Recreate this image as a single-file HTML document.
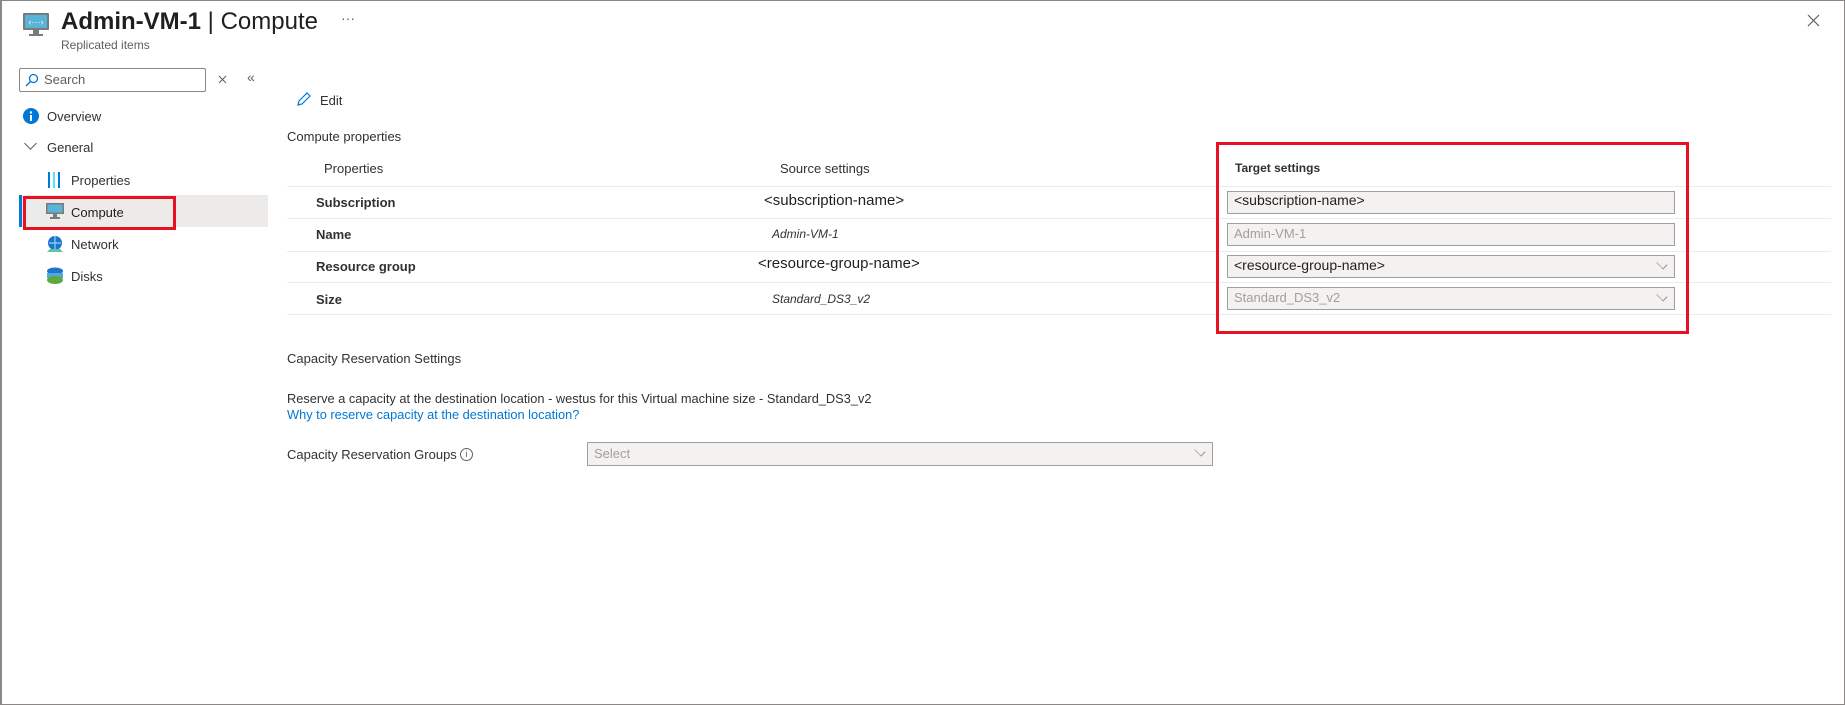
<!DOCTYPE html>
<html><head><meta charset="utf-8"><style>
*{margin:0;padding:0;box-sizing:border-box}
body{width:1845px;height:705px;background:#fff;font-family:"Liberation Sans",sans-serif;color:#323130;position:relative;overflow:hidden;font-size:13px}
.frame{position:absolute;left:0;top:0;width:1845px;height:705px;border:1px solid #8a8886;border-left:2px solid #8a8886}
.a{position:absolute;white-space:nowrap}
.b{font-weight:bold}
.line{position:absolute;left:287px;width:1544px;height:1px;background:#edebe9}
.inp{position:absolute;left:1227px;width:448px;height:23px;background:#f3f2f1;border:1px solid #a19f9d;font-size:13px;padding:2px 6px;color:#a19f9d}
.chev{position:absolute;right:8px;top:4px;width:8px;height:8px;border-right:1px solid #a19f9d;border-bottom:1px solid #a19f9d;transform:rotate(45deg) scale(1.2,0.8)}
</style></head><body>
<div class="frame"></div>
<svg class="a" style="left:22px;top:12px" width="28" height="26" viewBox="0 0 28 26"><rect x="1" y="1" width="26" height="17" rx="1" fill="#7a7a7a"/><rect x="3" y="3" width="22" height="13" fill="#59b4d9"/><text x="14" y="13" font-size="9" fill="#fff" text-anchor="middle" font-family="Liberation Sans">‹···›</text><rect x="11" y="18" width="6" height="4" fill="#7a7a7a"/><rect x="7" y="22" width="14" height="2" fill="#7a7a7a"/></svg>
<div class="a" style="left:61px;top:8px;font-size:24px;color:#201f1e"><span class="b">Admin-VM-1</span> | Compute</div>
<div class="a" style="left:341px;top:10px;font-size:14px;color:#605e5c">···</div>
<div class="a" style="left:61px;top:38px;font-size:12px;color:#605e5c">Replicated items</div>
<svg class="a" style="left:1807px;top:14px" width="13" height="13"><path d="M1 1L12 12M12 1L1 12" stroke="#605e5c" stroke-width="1.2"/></svg>

<div class="a" style="left:19px;top:68px;width:187px;height:24px;border:1px solid #8a8886;border-radius:2px"></div>
<svg class="a" style="left:25px;top:73px" width="14" height="14"><circle cx="8.5" cy="5.5" r="4" stroke="#0078d4" fill="none" stroke-width="1.3"/><line x1="5.5" y1="8.5" x2="1" y2="13" stroke="#0078d4" stroke-width="1.4"/></svg>
<div class="a" style="left:44px;top:72px;font-size:13px;color:#605e5c">Search</div>
<svg class="a" style="left:218px;top:75px" width="9" height="9"><path d="M1 1L8 8M8 1L1 8" stroke="#605e5c" stroke-width="1"/></svg>
<div class="a" style="left:247px;top:69px;font-size:14px;color:#605e5c">«</div>

<svg class="a" style="left:23px;top:108px" width="16" height="16"><circle cx="8" cy="8" r="8" fill="#0078d4"/><rect x="7" y="7" width="2" height="6" fill="#fff"/><circle cx="8" cy="4.5" r="1.2" fill="#fff"/></svg>
<div class="a" style="left:47px;top:109px;font-size:13px">Overview</div>
<div class="a" style="left:26px;top:139px;width:9px;height:9px;border-right:1px solid #605e5c;border-bottom:1px solid #605e5c;transform:rotate(45deg)"></div>
<div class="a" style="left:47px;top:140px;font-size:13px">General</div>
<svg class="a" style="left:47px;top:172px" width="14" height="16"><rect x="1" y="0" width="2" height="16" fill="#0078d4"/><rect x="6" y="0" width="2" height="16" fill="#50e6ff"/><rect x="11" y="0" width="2" height="16" fill="#0078d4"/></svg>
<div class="a" style="left:71px;top:173px;font-size:13px">Properties</div>
<div class="a" style="left:19px;top:195px;width:249px;height:32px;background:#edebe9"></div>
<div class="a" style="left:19px;top:195px;width:3px;height:32px;background:#0078d4"></div>
<svg class="a" style="left:46px;top:203px" width="18" height="16"><rect x="0" y="0" width="18" height="11" fill="#7a7a7a"/><rect x="1.5" y="1.5" width="15" height="8" fill="#59b4d9"/><rect x="7" y="11" width="4" height="3" fill="#7a7a7a"/><rect x="4" y="14" width="10" height="2" fill="#7a7a7a"/></svg>
<div class="a" style="left:71px;top:205px;font-size:13px;color:#201f1e">Compute</div>
<div class="a" style="left:23px;top:196px;width:153px;height:34px;border:3px solid #e81123"></div>
<svg class="a" style="left:46px;top:235px" width="18" height="18"><circle cx="9" cy="8" r="7" fill="#1e74c8"/><path d="M3 8h12M9 1v14" stroke="#8fd3ff" stroke-width="1.2"/><path d="M1 17h16l-3-3H4z" fill="#5ec3a0"/></svg>
<div class="a" style="left:71px;top:237px;font-size:13px">Network</div>
<svg class="a" style="left:46px;top:267px" width="18" height="18"><ellipse cx="9" cy="4" rx="8" ry="3.5" fill="#1e74c8"/><rect x="1" y="6" width="16" height="5" fill="#50a8e0"/><ellipse cx="9" cy="13" rx="8" ry="4" fill="#5ea93d"/></svg>
<div class="a" style="left:71px;top:269px;font-size:13px">Disks</div>

<svg class="a" style="left:296px;top:91px" width="16" height="16"><path d="M2 14l1-4L11 2l3 3-8 8z" fill="none" stroke="#0078d4" stroke-width="1.2"/></svg>
<div class="a" style="left:320px;top:93px;font-size:13px">Edit</div>
<div class="a" style="left:287px;top:129px;font-size:13px">Compute properties</div>
<div class="a" style="left:324px;top:161px;font-size:13px">Properties</div>
<div class="a" style="left:780px;top:161px;font-size:13px">Source settings</div>
<div class="a b" style="left:1235px;top:161px;font-size:12px">Target settings</div>
<div class="line" style="top:186px"></div>
<div class="line" style="top:218px"></div>
<div class="line" style="top:251px"></div>
<div class="line" style="top:282px"></div>
<div class="line" style="top:314px"></div>
<div class="a b" style="left:316px;top:195px;font-size:13px">Subscription</div>
<div class="a b" style="left:316px;top:227px;font-size:13px">Name</div>
<div class="a b" style="left:316px;top:259px;font-size:13px">Resource group</div>
<div class="a b" style="left:316px;top:292px;font-size:13px">Size</div>
<div class="a" style="left:764px;top:192px;font-size:15px;color:#201f1e">&lt;subscription-name&gt;</div>
<div class="a" style="left:772px;top:227px;font-size:12px;font-style:italic">Admin-VM-1</div>
<div class="a" style="left:758px;top:255px;font-size:15px;color:#201f1e">&lt;resource-group-name&gt;</div>
<div class="a" style="left:772px;top:292px;font-size:12px;font-style:italic">Standard_DS3_v2</div>
<div class="inp" style="top:191px;color:#201f1e;font-size:14px;padding-top:0">&lt;subscription-name&gt;</div>
<div class="inp" style="top:223px">Admin-VM-1</div>
<div class="inp" style="top:255px;color:#201f1e;font-size:14px;padding-top:1px">&lt;resource-group-name&gt;<div class="chev"></div></div>
<div class="inp" style="top:287px">Standard_DS3_v2<div class="chev"></div></div>
<div class="a" style="left:1216px;top:142px;width:473px;height:192px;border:3px solid #e81123"></div>

<div class="a" style="left:287px;top:351px;font-size:13px">Capacity Reservation Settings</div>
<div class="a" style="left:287px;top:391px;font-size:12.8px">Reserve a capacity at the destination location - westus for this Virtual machine size - Standard_DS3_v2</div>
<div class="a" style="left:287px;top:407px;font-size:12.8px;color:#0078d4">Why to reserve capacity at the destination location?</div>
<div class="a" style="left:287px;top:447px;font-size:13px">Capacity Reservation Groups</div>
<div class="a" style="left:460px;top:448px;width:13px;height:13px;border:1px solid #605e5c;border-radius:50%;font-size:9px;text-align:center;line-height:11px;color:#605e5c">i</div>
<div class="inp" style="left:587px;top:442px;width:626px;height:24px;padding-top:3px">Select<div class="chev"></div></div>
</body></html>
